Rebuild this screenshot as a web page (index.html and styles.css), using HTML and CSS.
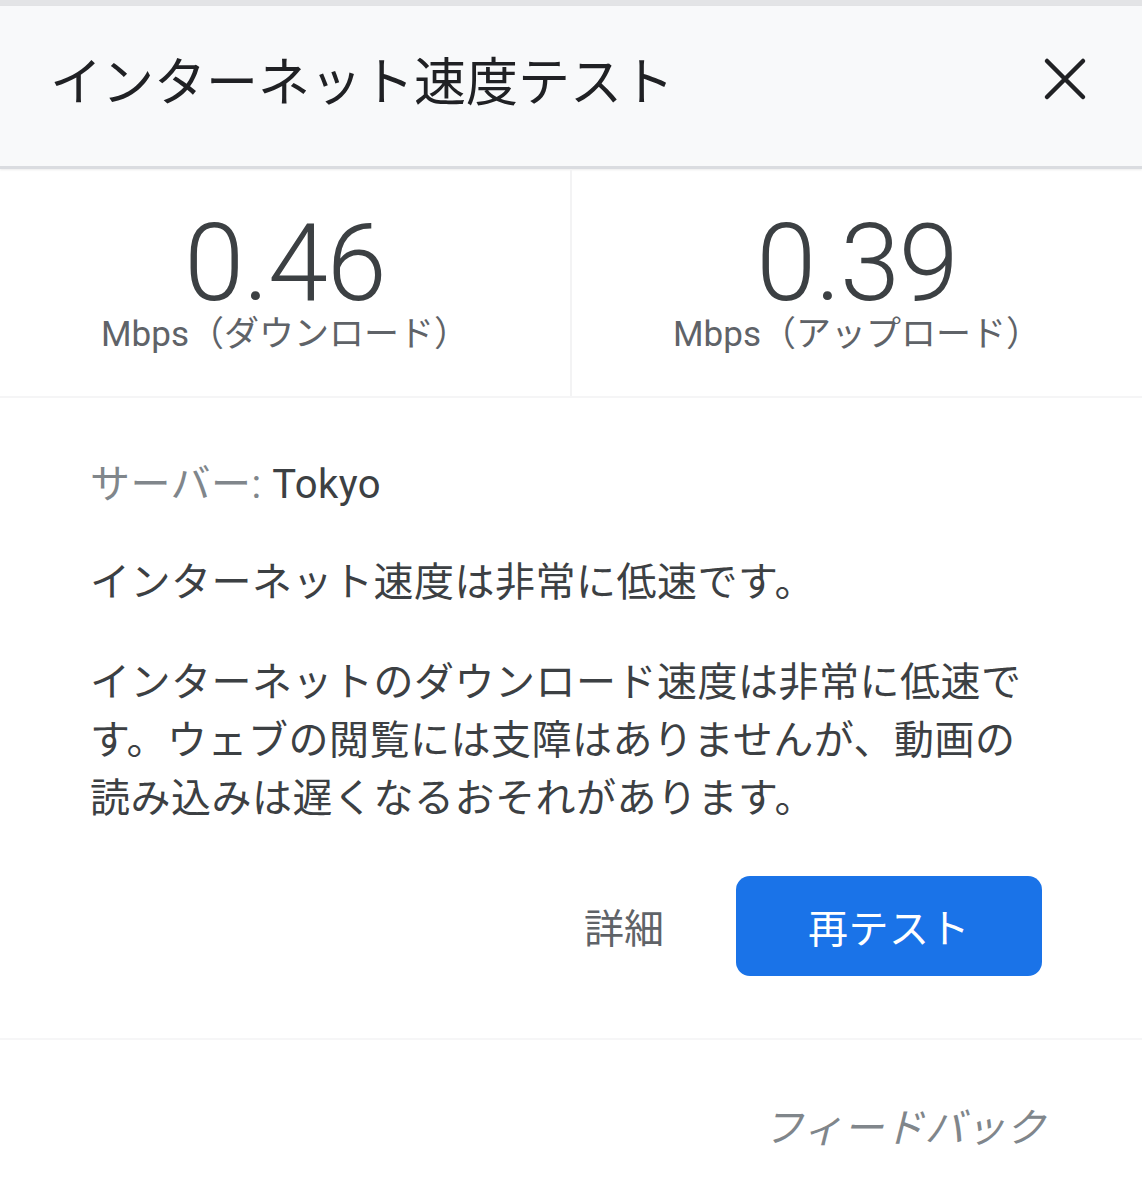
FILE: index.html
```html
<!DOCTYPE html>
<html lang="ja">
<head>
  <meta charset="UTF-8" />
  <title>インターネット速度テスト</title>
  <meta name="viewport" content="width=device-width, initial-scale=1" />
  <link rel="stylesheet" href="styles.css">
</head>
<body>
  <div class="card">
    <div class="header">
      <h1 class="title">インターネット速度テスト</h1>
      <button class="close" aria-label="閉じる">
        <svg width="44" height="44" viewBox="0 0 44 44"><path d="M4 4L40 40M40 4L4 40" stroke="#202124" stroke-width="4.5" stroke-linecap="round"/></svg>
      </button>
    </div>

    <div class="results">
      <div class="result">
        <div class="value">0.46</div>
        <div class="unit">Mbps（ダウンロード）</div>
      </div>
      <div class="result">
        <div class="value">0.39</div>
        <div class="unit">Mbps（アップロード）</div>
      </div>
    </div>

    <div class="body">
      <p class="server"><span class="label">サーバー:</span> Tokyo</p>
      <p>インターネット速度は非常に低速です。</p>
      <p>インターネットのダウンロード速度は非常に低速です。ウェブの閲覧には支障はありませんが、動画の読み込みは遅くなるおそれがあります。</p>
      <div class="actions">
        <button class="link">詳細</button>
        <button class="primary">再テスト</button>
      </div>
    </div>

    <div class="footer">
      <a class="feedback" href="#">フィードバック</a>
    </div>
  </div>
</body>
</html>
```

FILE: styles.css
```css
body { margin: 0; background: #fff; font-family: Roboto, "Noto Sans CJK JP", sans-serif; color: #3c4043; }
.card { width: 1142px; min-height: 1200px; background: #fff; border-top: 6px solid #e3e4e6; box-sizing: border-box; }
.header { height: 163px; background: #f8f9fa; display: flex; align-items: center; justify-content: space-between; padding: 0 55px 15px 50px; box-sizing: border-box; border-bottom: 3px solid #dadce0; box-shadow: 0 1px 2px rgba(0,0,0,0.08); }
.title { margin: 0; font-size: 52px; font-weight: 400; color: #202124; letter-spacing: 0; }
.close { background: none; border: none; padding: 0; width: 44px; height: 44px; cursor: pointer; }
.results { display: flex; border-bottom: 2px solid #f5f5f6; }
.result { flex: 1; height: 227px; display: flex; flex-direction: column; align-items: center; padding-top: 52px; box-sizing: border-box; }
.result + .result { border-left: 2px solid #f3f3f4; }
.value { font-size: 108px; font-weight: 300; line-height: 84px; color: #3c4043; letter-spacing: -1px; }
.unit { font-size: 35px; line-height: 38px; color: #5f6368; margin-top: 11px; }
.body { padding: 58px 100px 0 90px; }
.body p { margin: 0 0 40px; font-size: 40px; line-height: 58px; letter-spacing: 0.5px; color: #3c4043; }
.body .server { margin-bottom: 40px; }
.body .server + p { margin-bottom: 42px; }
.label { color: #80868b; }
.actions { display: flex; justify-content: flex-end; align-items: center; gap: 72px; margin-top: 48px; padding-bottom: 62px; }
.link { background: none; border: none; font: inherit; font-size: 40px; color: #5f6368; padding: 0; }
.primary { width: 306px; height: 100px; border: none; border-radius: 14px; background: #1a73e8; color: #fff; font: inherit; font-size: 40px; letter-spacing: 0.5px; cursor: pointer; }
.footer { border-top: 2px solid #f6f6f7; display: flex; justify-content: flex-end; padding: 56px 96px 0 0; }
.feedback { font-size: 40px; letter-spacing: 0.5px; color: #80868b; font-style: italic; text-decoration: none; }
```
